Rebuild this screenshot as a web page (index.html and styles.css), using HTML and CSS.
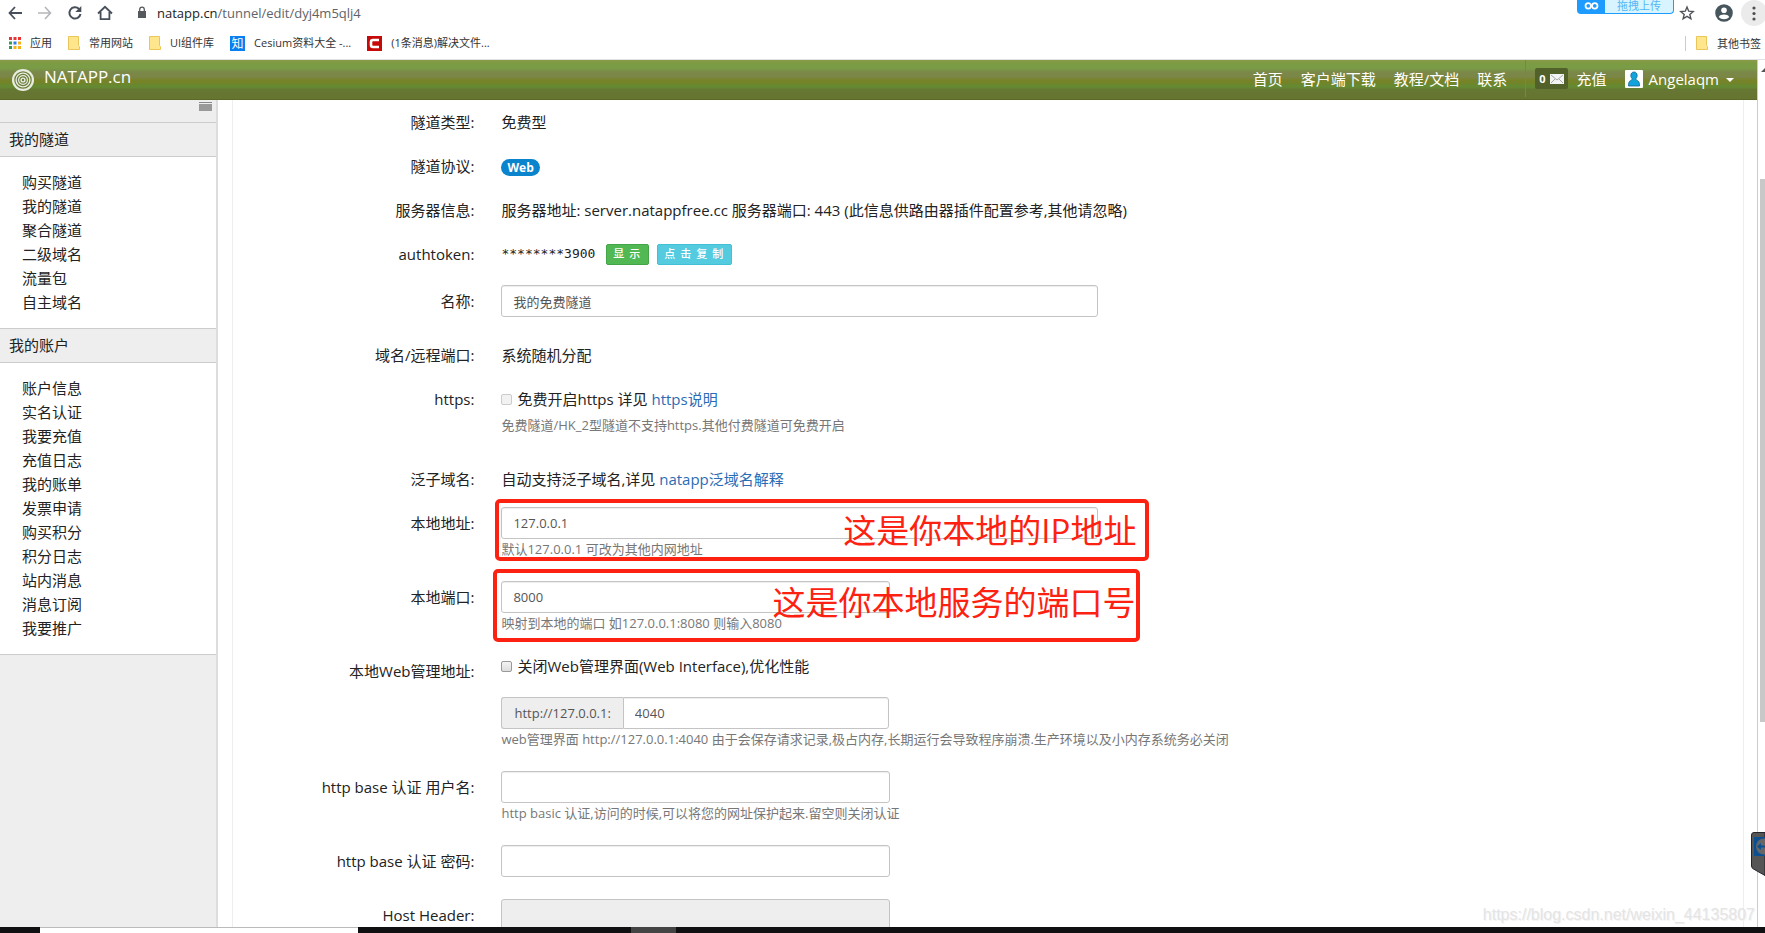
FILE: index.html
```html
<!DOCTYPE html>
<html lang="zh-CN">
<head>
<meta charset="utf-8">
<title>NATAPP.cn</title>
<link rel="stylesheet" href="styles.css">
</head>
<body>
<header class="browser">
  <div class="toolbar">
    <svg class="ic" viewBox="0 0 16 16"><path d="M15 8H2.500M8 2 2.500 8 8 14" fill="none" stroke="#47505a" stroke-width="1.800"/></svg>
    <svg class="ic" viewBox="0 0 16 16"><path d="M1 8h12.500M8 2 13.500 8 8 14" fill="none" stroke="#b4b6b9" stroke-width="1.600"/></svg>
    <svg class="ic" viewBox="0 0 16 16"><path d="M13.500 9A5.600 5.600 0 1 1 12 4" fill="none" stroke="#47505a" stroke-width="2"/><path d="M14.300 1v6H8.300z" fill="#47505a"/></svg>
    <svg class="ic" viewBox="0 0 16 16"><path d="M1 8.500 8 1.800l7 6.700M3.600 7v7.200h8.800V7" fill="none" stroke="#47505a" stroke-width="1.800"/></svg>
    <svg class="ic ic-lock" viewBox="0 0 10 14"><path d="M1 5h8v7H1z" fill="#55595e"/><path d="M2.700 6V3.500a2.300 2.300 0 0 1 4.600 0V6" fill="none" stroke="#55595e" stroke-width="1.300"/></svg>
    <span class="url"><b>natapp.cn</b>/tunnel/edit/dyj4m5qlj4</span>
    <span class="upload"><svg viewBox="0 0 27 18"><g fill="none" stroke="#fff" stroke-width="2.400"><circle cx="9" cy="8" r="3.800"/><circle cx="18" cy="8" r="3.800"/></g></svg><span class="upload-text">拖拽上传</span></span>
    <svg class="ic ic-star" viewBox="0 0 16 16"><path d="m8 2 1.700 4.200 4.500.3-3.400 2.900 1.100 4.400L8 11.400l-3.900 2.400 1.100-4.400L1.800 6.500l4.500-.3z" fill="none" stroke="#505458" stroke-width="1.400"/></svg>
    <svg class="ic-user" viewBox="0 0 18 18"><circle cx="9" cy="9" r="8.800" fill="#47565c"/><circle cx="9" cy="6.300" r="2.800" fill="#fff"/><path d="M3.800 13c1.500-3.200 8.900-3.200 10.400 0-2.600 3-7.800 3-10.400 0z" fill="#fff"/></svg>
    <svg class="ic-more" viewBox="0 0 24 26"><circle cx="13" cy="13" r="13" fill="#ebebeb"/><g fill="#4c5054"><circle cx="13" cy="8" r="1.600"/><circle cx="13" cy="13.500" r="1.600"/><circle cx="13" cy="19" r="1.600"/></g></svg>
  </div>
  <nav class="bookmarks">
    <a href="#"><svg class="bm-apps" viewBox="0 0 12 12"><path fill="#ea3535" d="M0 0h3v3H0zM4.500 0h3v3h-3zM9 0h3v3H9z"/><path fill="#2f9e50" d="M0 4.500h3v3H0z"/><path fill="#2f7de1" d="M4.500 4.500h3v3h-3z"/><path fill="#f5b21a" d="M9 4.500h3v3H9zM4.500 9h3v3h-3zM9 9h3v3H9z"/><path fill="#2f9e50" d="M0 9h3v3H0z"/></svg>应用</a>
    <a href="#"><svg class="bm-folder" viewBox="0 0 12 14"><path d="M.5.5h10v9l1 1v3H.5z" fill="#ffe68c" stroke="#e9c55a"/></svg>常用网站</a>
    <a href="#"><svg class="bm-folder" viewBox="0 0 12 14"><path d="M.5.5h10v9l1 1v3H.5z" fill="#ffe68c" stroke="#e9c55a"/></svg>UI组件库</a>
    <a href="#"><span class="bm-site bm-zhi">知</span>Cesium资料大全 -...</a>
    <a href="#"><span class="bm-site bm-c"><svg viewBox="0 0 15 15"><path d="M12 4H6Q4 4 4 6v3q0 2 2 2h6" fill="none" stroke="#fff" stroke-width="2.600"/></svg></span>(1条消息)解决文件...</a>
    <a href="#" class="bm-other"><svg class="bm-folder" viewBox="0 0 12 14"><path d="M.5.5h10v9l1 1v3H.5z" fill="#ffe68c" stroke="#e9c55a"/></svg>其他书签</a>
  </nav>
</header>

<div class="page">
  <div class="site">
    <nav class="navbar">
      <a class="brand" href="#"><svg viewBox="0 0 22 22"><circle cx="11" cy="11" r="11" fill="#e9eddf"/><g fill="none" stroke="#6d7d3c" stroke-width="1.200"><circle cx="11" cy="11" r="8.200"/><circle cx="11" cy="11" r="5.600"/><circle cx="11" cy="11" r="3.200"/></g><circle cx="11" cy="11" r="1.200" fill="#6d7d3c"/></svg><span>NATAPP.cn</span></a>
      <div class="links">
        <a href="#">首页</a><a href="#">客户端下载</a><a href="#">教程/文档</a><a href="#">联系</a>
      </div>
      <div class="account">
        <a class="mail" href="#">0<svg viewBox="0 0 14 10"><path d="M0 0h14v10H0z" fill="#f3f3f3"/><path d="m1 1 6 5 6-5M1 9l4-4M13 9 9 5" fill="none" stroke="#a8a8a8"/></svg></a>
        <a href="#">充值</a>
        <a class="user" href="#"><svg viewBox="0 0 18 18"><rect width="18" height="18" rx="1" fill="#fff"/><path d="M9 2c2 0 3.200 1.500 3.200 3.500 0 1.600-.8 2.500-1.300 3.200 0 1 .4 1.300 1.600 1.900 1.500.8 2 2 2 5.400h-11c0-3.400.5-4.600 2-5.400 1.200-.6 1.600-.9 1.600-1.900-.5-.7-1.300-1.600-1.300-3.200C5.800 3.500 7 2 9 2z" fill="#12a3dc" stroke="#17668c" stroke-width=".8"/></svg>Angelaqm<i class="caret"></i></a>
      </div>
    </nav>
    <div class="body">
      <aside class="sidebar">
        <div class="fold"><i></i></div>
        <h2>我的隧道</h2>
        <ul><li><a href="#">购买隧道</a></li><li><a href="#">我的隧道</a></li><li><a href="#">聚合隧道</a></li><li><a href="#">二级域名</a></li><li><a href="#">流量包</a></li><li><a href="#">自主域名</a></li></ul>
        <h2>我的账户</h2>
        <ul><li><a href="#">账户信息</a></li><li><a href="#">实名认证</a></li><li><a href="#">我要充值</a></li><li><a href="#">充值日志</a></li><li><a href="#">我的账单</a></li><li><a href="#">发票申请</a></li><li><a href="#">购买积分</a></li><li><a href="#">积分日志</a></li><li><a href="#">站内消息</a></li><li><a href="#">消息订阅</a></li><li><a href="#">我要推广</a></li></ul>
      </aside>
      <form class="panel">
        <div class="row"><span class="label">隧道类型:</span><div class="field">免费型</div></div>
        <div class="row"><span class="label">隧道协议:</span><div class="field"><span class="badge">Web</span></div></div>
        <div class="row"><span class="label">服务器信息:</span><div class="field">服务器地址: server.natappfree.cc 服务器端口: 443 (此信息供路由器插件配置参考,其他请忽略)</div></div>
        <div class="row row-token"><span class="label">authtoken:</span><div class="field token"><code>********3900</code><button type="button" class="btn btn-green">显示</button><button type="button" class="btn btn-cyan">点击复制</button></div></div>
        <div class="row row-input"><label class="label" for="name">名称:</label><div class="field"><input class="control wide" id="name" type="text" value="我的免费隧道"></div></div>
        <div class="row"><span class="label">域名/远程端口:</span><div class="field">系统随机分配</div></div>
        <div class="row row-https"><span class="label">https:</span><div class="field"><input class="check" id="https" type="checkbox" disabled><label for="https">免费开启https 详见</label> <a href="#">https说明</a><p class="help">免费隧道/HK_2型隧道不支持https.其他付费隧道可免费开启</p></div></div>
        <div class="row"><span class="label">泛子域名:</span><div class="field">自动支持泛子域名,详见 <a href="#">natapp泛域名解释</a></div></div>
        <div class="row row-input"><label class="label" for="addr">本地地址:</label><div class="field"><input class="control wide" id="addr" type="text" value="127.0.0.1"><p class="help">默认127.0.0.1 可改为其他内网地址</p><div class="note note-addr">这是你本地的IP地址</div></div></div>
        <div class="row row-input"><label class="label" for="port">本地端口:</label><div class="field"><input class="control" id="port" type="text" value="8000"><p class="help">映射到本地的端口 如127.0.0.1:8080 则输入8080</p><div class="note note-port">这是你本地服务的端口号</div></div></div>
        <div class="row row-input"><label class="label" for="web">本地Web管理地址:</label><div class="field"><div class="line"><input class="check" id="closeweb" type="checkbox"><label for="closeweb">关闭Web管理界面(Web Interface),优化性能</label></div><div class="group"><span>http://127.0.0.1:</span><input class="control" id="web" type="text" value="4040"></div><p class="help">web管理界面 http://127.0.0.1:4040 由于会保存请求记录,极占内存,长期运行会导致程序崩溃.生产环境以及小内存系统务必关闭</p></div></div>
        <div class="row row-input"><label class="label" for="user">http base 认证 用户名:</label><div class="field"><input class="control" id="user" type="text"><p class="help">http basic 认证,访问的时候,可以将您的网址保护起来.留空则关闭认证</p></div></div>
        <div class="row row-input"><label class="label" for="pass">http base 认证 密码:</label><div class="field"><input class="control" id="pass" type="text"></div></div>
        <div class="row row-input"><label class="label" for="host">Host Header:</label><div class="field"><input class="control" id="host" type="text" disabled></div></div>
      </form>
    </div>
  </div>
  <div class="scrollbar"><i class="arrow"></i><i class="thumb"></i></div>
  <span class="watermark">https://blog.csdn.net/weixin_44135807</span>
  <svg class="remote" viewBox="0 0 14 44"><path d="M14 .5H3Q.5.5.5 3v31q0 2 2 3l11.500 6.500z" fill="#555" stroke="#23232b"/><path d="M3 5h11v19H3z" fill="#0c4f91"/><circle cx="13" cy="14.500" r="8" fill="#666"/><path d="M6 14.500 10 11v2.500h4v2h-4V18z" fill="#0c4f91"/></svg>
</div>
<footer class="taskbar"><i class="task-search"></i><i class="task-active"></i></footer>
</body>
</html>
```
FILE: styles.css
```css
* { box-sizing: border-box; }
body {
  margin: 0;
  height: 100vh;
  display: flex;
  flex-direction: column;
  overflow: hidden;
  background: #fff;
  color: #222;
  font: 15px/22px "Open Sans", "Noto Sans CJK SC", sans-serif;
}
a { color: #2a6cb5; text-decoration: none; }
svg { display: block; flex: none; }
p, ul, h2 { margin: 0; padding: 0; }
input, button { font-family: inherit; }

.browser { height: 60px; flex: none; border-bottom: 1px solid #dfe1e5; }
.toolbar { display: flex; align-items: center; height: 26px; padding-left: 7px; }
.ic { width: 16px; height: 16px; margin-right: 14px; }
.ic-lock { width: 10px; height: 14px; margin: 0 10px 0 10px; }
.url { color: #5f6368; font-size: 13px; }
.url b { color: #222; font-weight: 400; }
.upload { display: flex; align-self: flex-start; width: 97px; height: 14px; margin-left: auto; border: 1px solid #1e9bff; border-top: 0; border-radius: 0 0 4px 4px; background: #d8f5ff; color: #53b7f5; font-size: 11px; line-height: 12px; }
.upload svg { width: 27px; height: 13px; background: #1e9bff; }
.upload-text { flex: 1; text-align: center; }
.ic-star { margin: 0 20px 0 5px; }
.ic-user { width: 18px; height: 18px; margin-right: 8px; }
.ic-more { width: 24px; height: 26px; }

.bookmarks { display: flex; align-items: center; height: 34px; padding-left: 9px; gap: 16px; font-size: 11px; }
.bookmarks a { display: flex; align-items: center; gap: 9px; color: #333; }
.bm-apps { width: 12px; height: 12px; }
.bm-folder { width: 12px; height: 14px; }
.bm-site { display: grid; place-items: center; width: 15px; height: 15px; color: #fff; font-size: 12px; line-height: 15px; }
.bm-site svg { width: 15px; height: 15px; }
.bm-zhi { background: #0a7ff0; }
.bm-c { background: #c60a0a; }
.bookmarks .bm-other { margin-left: auto; margin-right: 4px; padding-left: 10px; border-left: 1px solid #ccc; line-height: 15px; }

.page { position: relative; display: flex; flex: 1; min-height: 0; overflow: hidden; }
.site { display: flex; flex-direction: column; flex: 1; min-width: 0; }
.navbar {
  display: flex; align-items: center; height: 40px; flex: none; padding: 0 22px 2px 12px;
  border-bottom: 1px solid #596a27;
  background: linear-gradient(#8a9a45 0, #7a9c44 4px, #7b9c46 8px, #7a8849 12px, #7a8646 17px, #788329 20px, #738428 23px, #638a33 26px, #658630 28px, #667734 29px, #66752f 100%);
}
.navbar a { display: flex; align-items: center; color: #fff; }
.navbar .brand { align-items: flex-end; gap: 10px; font-size: 17px; }
.brand span { padding-bottom: 3px; }
.brand svg { width: 22px; height: 22px; }
.links { display: flex; gap: 18px; margin-left: auto; padding-right: 18px; }
.account { display: flex; align-items: center; gap: 9px; height: 37px; padding-left: 9px; border-left: 1px solid #7d8a28; }
.mail { gap: 4px; height: 21px; padding: 0 4px; border-radius: 2px; background: #52602a; font-size: 11px; font-weight: 700; }
.mail svg { width: 14px; height: 10px; }
.user { gap: 6px; margin-left: 9px; }
.user svg { width: 18px; height: 18px; }
.caret { width: 0; margin: 2px 1px 0 1px; border: 4px solid transparent; border-top: 4px solid #fff; border-bottom: 0; }

.body { display: flex; flex: 1; min-height: 0; }
.sidebar { width: 218px; flex: none; border-right: 2px solid #ddd; background: #eee; }
.fold { height: 22px; padding: 2px 4px 0; }
.fold i { display: block; width: 13px; height: 9px; margin-left: auto; border-top: 1px solid #888; background: #999; box-shadow: inset 0 1px #eee; }
.sidebar h2 { height: 35px; padding-left: 9px; border: 1px solid #ccc; border-width: 1px 0; font-size: 15px; font-weight: 400; line-height: 32px; }
.sidebar ul { padding: 13px 0 14px 22px; background: #fff; list-style: none; line-height: 24px; }
.sidebar ul:last-child { border-bottom: 1px solid #ccc; }
.sidebar a { color: #222; }

.panel { flex: 1; min-width: 0; margin: 0 13px 0 14px; padding: 6px 1px 0 0; border: 1px solid #eee; border-width: 0 1px; overflow: hidden; }
.row { display: grid; grid-template-columns: 16% 1fr; gap: 27px; margin-bottom: 12px; line-height: 32px; }
.row-token { margin-bottom: 15px; }
.row-input { margin-bottom: 22px; }
.row-https { margin-bottom: 28px; }
.label { text-align: right; }
.field { position: relative; }
.badge { display: inline-block; padding: 0 6px; border-radius: 9px; background: #0b84ce; color: #fff; font-size: 12px; font-weight: 700; line-height: 17px; }
.token { display: flex; align-items: center; }
code { margin-right: 11px; font: 13px/20px "DejaVu Sans Mono", monospace; }
.btn { height: 21px; margin-right: 8px; padding: 0 3px 0 6px; border: 1px solid #43a548; border-radius: 2px; color: #fff; font-size: 11px; font-weight: 500; line-height: 18px; letter-spacing: 5px; }
.btn-green { background: #52b853; }
.btn-cyan { border-color: #43bfd6; background: #55cbe0; }
.control { display: block; width: 389px; height: 32px; padding: 0 11px; border: 1px solid #c4c4c4; border-radius: 3px; background: #fff; color: #555; font-size: 13px; box-shadow: inset 0 1px 1px #eee; }
.control:disabled { background: #eee; }
.wide { width: 597px; }
.help { color: #777; font-size: 13px; line-height: 20px; }
.check { appearance: none; width: 11px; height: 11px; margin: 0 5px 0 0; border: 1px solid #999; border-radius: 2px; background: linear-gradient(#f4f4f4, #ddd); }
.check:disabled { border-color: #ccc; background: #f2f2f2; }
.line { margin-bottom: 20px; line-height: 22px; }
.group { display: flex; width: 388px; }
.group span { padding: 0 12px; border: 1px solid #c4c4c4; border-right: 0; border-radius: 3px 0 0 3px; background: #eee; color: #555; font-size: 13px; line-height: 30px; }
.group .control { flex: 1; width: auto; min-width: 0; border-radius: 0 3px 3px 0; }
.note { position: absolute; border: 4px solid #fc2110; border-radius: 5px; color: #fc2110; font-size: 33px; text-align: right; white-space: nowrap; }
.note-addr { left: -6px; top: -8px; width: 654px; height: 62px; padding-right: 9px; line-height: 56px; }
.note-port { left: -8px; top: -12px; width: 647px; height: 73px; padding-right: 1px; line-height: 60px; }

.scrollbar { width: 8px; flex: none; padding-left: 2px; border-left: 1px solid #ccc; background: #fff; }
.arrow { display: block; width: 0; margin: 8px 0 0 1px; border: 4px solid transparent; border-top: 0; border-bottom: 4px solid #555; }
.thumb { display: block; height: 543px; margin-top: 107px; background: #c8c8c8; }
.watermark { position: absolute; right: 10px; bottom: 1px; color: #e4e4e4; font: 16px/22px "Liberation Sans", sans-serif; text-shadow: 1px 1px #f4f4f4; }
.remote { position: absolute; right: 0; bottom: 51px; width: 14px; height: 44px; }

.taskbar { display: flex; height: 6px; flex: none; background: #101012; }
.task-search { width: 318px; margin-left: 40px; border-top: 1px solid #bbb; background: #fff; }
.task-active { width: 45px; margin-left: 273px; background: #444; }
```
